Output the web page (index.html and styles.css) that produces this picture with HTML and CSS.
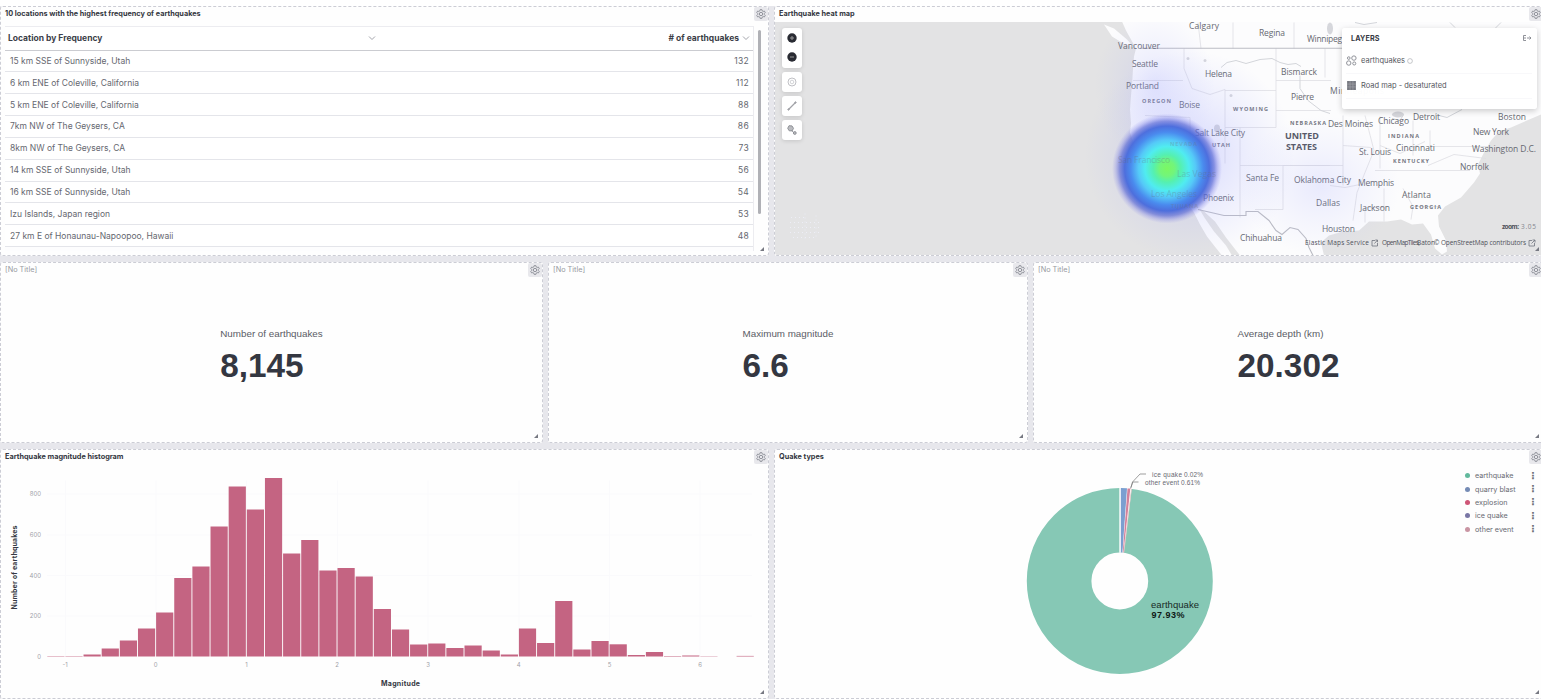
FILE: index.html
```html
<!DOCTYPE html>
<html lang="en">
<head>
<meta charset="utf-8">
<title>Earthquake dashboard</title>
<link rel="stylesheet" href="styles.css">
</head>
<body>
<svg class="defs" width="0" height="0">
  <defs>
    <symbol id="gear" viewBox="0 0 16 16">
      <path d="M6.600 1h2.800l.5 2 1.500.9 2-.6 1.400 2.400L13.300 7.200v1.600l1.500 1.500-1.400 2.400-2-.6-1.500.9-.5 2H6.600l-.5-2-1.500-.9-2 .6-1.400-2.400 1.500-1.500V7.200L1.200 5.700l1.400-2.400 2 .6 1.500-.9z" fill="none" stroke="currentColor" stroke-width="1.500"/>
      <circle cx="8" cy="8" r="2.700" fill="none" stroke="currentColor" stroke-width="1.500"/>
    </symbol>
  </defs>
</svg>
<main class="dashboard">
  <div class="row row-top">
    <section class="panel">
      <header class="panel-head"><h2 class="title">10 locations with the highest frequency of earthquakes</h2><button class="gear"><svg><use href="#gear"/></svg></button></header>
      <div class="table-wrap">
        <div class="table">
          <div class="tr th"><span class="th-name">Location by Frequency</span><svg class="chev" viewBox="0 0 8 8"><path d="M1 2.500l3 3 3-3"/></svg><span class="th-count"># of earthquakes</span><svg class="chev" viewBox="0 0 8 8"><path d="M1 2.500l3 3 3-3"/></svg></div>
          <div class="tr"><span>15 km SSE of Sunnyside, Utah</span><span class="num">132</span></div>
          <div class="tr"><span>6 km ENE of Coleville, California</span><span class="num">112</span></div>
          <div class="tr"><span>5 km ENE of Coleville, California</span><span class="num">88</span></div>
          <div class="tr"><span>7km NW of The Geysers, CA</span><span class="num">86</span></div>
          <div class="tr"><span>8km NW of The Geysers, CA</span><span class="num">73</span></div>
          <div class="tr"><span>14 km SSE of Sunnyside, Utah</span><span class="num">56</span></div>
          <div class="tr"><span>16 km SSE of Sunnyside, Utah</span><span class="num">54</span></div>
          <div class="tr"><span>Izu Islands, Japan region</span><span class="num">53</span></div>
          <div class="tr"><span>27 km E of Honaunau-Napoopoo, Hawaii</span><span class="num">48</span></div>
        </div>
        <div class="scrollbar"></div>
      </div>
      <i class="resize"></i>
    </section>
    <section class="panel map-panel">
      <header class="panel-head"><h2 class="title">Earthquake heat map</h2><button class="gear"><svg><use href="#gear"/></svg></button></header>
      <div class="map">
        <svg class="map-svg" viewBox="775 21.500 768 233" width="768" height="233">
          <defs>
            <radialGradient id="heat">
              <stop offset="0" stop-color="#7cf763"/><stop offset=".14" stop-color="#72f57b"/><stop offset=".25" stop-color="#55f0b0"/><stop offset=".4" stop-color="#50ecf0"/><stop offset=".52" stop-color="#55c9f8"/><stop offset=".66" stop-color="#4a8bee"/><stop offset=".77" stop-color="#4669dc" stop-opacity=".95"/><stop offset=".86" stop-color="#5363d4" stop-opacity=".65"/><stop offset=".93" stop-color="#6b70e0" stop-opacity=".28"/><stop offset="1" stop-color="#8080e8" stop-opacity="0"/>
            </radialGradient>
            <radialGradient id="haze"><stop offset="0" stop-color="#8a90ff" stop-opacity=".34"/><stop offset=".55" stop-color="#9aa0ff" stop-opacity=".15"/><stop offset="1" stop-color="#a0a8ff" stop-opacity="0"/></radialGradient>
          </defs>
          <rect x="775" y="21" width="768" height="235" fill="#e3e3e4"/>
          <path fill="#fcfcfd" d="M1122 21l4 9 5 9 5 9-2 8-1 12-1 17-1 10-1 14 1 14-1 9 5 15 5 12 8 14 10 12 13 7 15 8 8 12 6 12 7 12 7 9 8 10h10l-6-10-12-14-9-13-6-10 5 3 11 10 11 16 14 18H1324l-3-13 8-7 14-4 16-1 10-9h18l14-2 11 5 11-1 8 11 4 14 7 6 5-3-1-11-7-14-1-11 7-9 16-9 13-15 6-9-2-9 5-10 8-14 8-9 12-4 32-14V21zM1104 24l10 4 13 11 7 8-9-3-13-8z"/>
          <g fill="none" stroke="#dedee3" stroke-width=".8">
            <path d="M1198 22l3 26M1233 22v26M1294 22v26M1276 48v79M1325 48v29M1184 48v20l8 20 18 6 15-5v38M1133 80h50M1276 80h55M1225 90h51M1225 127h51M1240 127v90M1276 110h55M1283 165v44h-28M1240 165h90M1283 165h60M1343 115v70M1330 185l15 2 15-3M1343 145l28 2M1365 115l9 35-9 22-8 20-4 28M1380 116v52M1413 120v35M1375 170h95M1380 145l20 8 25-12M1365 222v-15h20M1384 188v33M1403 188l10 18-2 13M1413 206h25M1430 130v16h58M1428 165l26-11 32 4M1145 115l45 2M1190 117v38l20 16M1225 127v36"/>
          </g>
          <path fill="none" stroke="#bbbcc4" stroke-width="1.100" d="M1140 47.700H1343M1198 209l26 6h22v-4h12l11 9 7 10 6 4 8-7 8 2 8 9 3 9 6 12"/>
          <g fill="none" stroke="#d3d5da"><path d="M1221 67l6-5 9-2 10 3 14-4 12-1 8 4 8 2 8-1 5 3M1300 75v13l8 12 13 10 9 3"/><path d="M1355 22l9 2 13-2M1450 22l5 5M1495 28l6-6M1395 112l8 3-3 5-8-2M1435 114l12 3 15-8"/></g>
          <g fill="#d6d7dc"><circle cx="1188" cy="58" r="1.500"/><circle cx="1205" cy="60" r="1.500"/><circle cx="1231" cy="95" r="1.500"/><ellipse cx="1217" cy="128" rx="3" ry="4"/><ellipse cx="1398" cy="114" rx="6" ry="3"/><ellipse cx="1330" cy="28" rx="3" ry="6"/></g>
          <g class="city">
            <text x="1118" y="48" textLength="42">Vancouver</text><text x="1189" y="28.500" textLength="30">Calgary</text><text x="1259" y="35" textLength="26">Regina</text><text x="1307" y="41" textLength="35">Winnipeg</text>
            <text x="1132" y="66" textLength="26">Seattle</text><text x="1126" y="88" textLength="33">Portland</text><text x="1205" y="76.500" textLength="27">Helena</text><text x="1281" y="74.500" textLength="36">Bismarck</text><text x="1179" y="107" textLength="21">Boise</text><text x="1291" y="99" textLength="23">Pierre</text><text x="1330" y="93" textLength="54">Minneapolis</text>
            <text x="1195" y="135" textLength="50">Salt Lake City</text><text x="1203" y="200.500" textLength="31">Phoenix</text><text x="1246" y="180.500" textLength="33">Santa Fe</text><text x="1294" y="182.500" textLength="57">Oklahoma City</text><text x="1316" y="205.500" textLength="24">Dallas</text><text x="1322" y="231" textLength="33">Houston</text><text x="1240" y="240" textLength="42">Chihuahua</text>
            <text x="1328" y="126.500" textLength="45">Des Moines</text><text x="1378" y="123.500" textLength="31">Chicago</text><text x="1413" y="119.500" textLength="27">Detroit</text><text x="1498" y="119" textLength="28">Boston</text><text x="1473" y="134.500" textLength="36">New York</text><text x="1359" y="154" textLength="32">St. Louis</text><text x="1396" y="150" textLength="39">Cincinnati</text><text x="1472" y="151.500" textLength="64">Washington D.C.</text><text x="1460" y="169.500" textLength="29">Norfolk</text><text x="1358" y="185.500" textLength="36">Memphis</text><text x="1402" y="197.500" textLength="29">Atlanta</text><text x="1360" y="210" textLength="30">Jackson</text>
          </g>
          <g class="state">
            <text x="1142" y="102" textLength="29">OREGON</text><text x="1233" y="110" textLength="35">WYOMING</text><text x="1290" y="124" textLength="36">NEBRASKA</text><text x="1212" y="146" textLength="18">UTAH</text><text x="1388" y="137" textLength="31">INDIANA</text><text x="1393" y="162.500" textLength="36">KENTUCKY</text><text x="1410" y="208.500" textLength="31">GEORGIA</text>
          </g>
          <g class="country"><text x="1285" y="138" textLength="34">UNITED</text><text x="1286" y="149" textLength="31">STATES</text></g>
          <ellipse cx="1190" cy="155" rx="105" ry="105" fill="url(#haze)"/>
          <ellipse cx="1155" cy="85" rx="60" ry="75" fill="url(#haze)" opacity=".6"/>
          <ellipse cx="1320" cy="185" rx="80" ry="70" fill="url(#haze)" opacity=".5"/>
          <circle cx="1167" cy="168" r="55" fill="url(#heat)"/>
          <g class="city under"><text x="1118" y="162" textLength="52">San Francisco</text><text x="1177" y="176.500" textLength="39">Las Vegas</text><text x="1151" y="196" textLength="46">Los Angeles</text></g>
          <g class="state under"><text x="1170" y="145" textLength="27">NEVADA</text><text x="1171" y="207" textLength="27">TIJUANA</text></g>
          <g fill="none" stroke="#eff0fa" stroke-dasharray="1 3" opacity=".8"><path d="M791 217h16M790 222h29M790 227h29M790 232h29M793 237h23M805 213v25M816 215v22"/></g>
          <g class="credit"><text x="1502" y="228.500" textLength="17" font-weight="700">zoom:</text><text x="1521" y="228.500" textLength="15" class="light">3.05</text><text x="1305" y="244.500" textLength="64">Elastic Maps Service</text><text x="1382" y="244.500" textLength="38">OpenMapTiles,</text><text x="1417" y="244.500" textLength="18">Baton</text><text x="1434" y="244.500" textLength="92">© OpenStreetMap contributors</text></g>
          <path fill="none" stroke="#70737d" stroke-width=".8" d="M1375 240h-3v5.500h5.500v-3M1374.500 243l3-3.500h-2.200m2.200 0v2.200M1532 240h-3v5.500h5.500v-3M1531.500 243l3.500-3.500h-2.500m2.500 0v2.500"/>
        </svg>
        <nav class="controls">
          <div class="ctl ctl-zoom">
            <svg viewBox="0 0 10 10"><circle cx="5" cy="5" r="4.700" fill="#292b33"/><path d="M3 5h4M5 3v4" stroke="#999"/></svg>
            <svg viewBox="0 0 10 10"><circle cx="5" cy="5" r="4.700" fill="#292b33"/><path d="M3 5h4" stroke="#999"/></svg>
          </div>
          <div class="ctl"><svg viewBox="0 0 10 10" fill="none" stroke="#c0c1c5"><circle cx="5" cy="5" r="4"/><circle cx="5" cy="5" r="1.800" stroke-width=".7"/></svg></div>
          <div class="ctl"><svg viewBox="0 0 10 10" stroke="#a2a3a8" fill="#a2a3a8"><path d="M1.500 8.500l7-7" stroke-width="1.300"/><circle cx="1.500" cy="8.500" r=".7"/><circle cx="8.500" cy="1.500" r=".7"/></svg></div>
          <div class="ctl"><svg viewBox="0 0 10 10" fill="#bbbcc0" stroke="#898b91" stroke-width=".9"><path d="M2 .7l3 .2 1.500 2.400-1.300 2.600-3-.1L.7 3.300z"/><path d="M4.700 5.500l2.200 2.300"/><circle cx="7.800" cy="8" r="1.400"/></svg></div>
        </nav>
        <aside class="layers">
          <div class="layers-head"><b>LAYERS</b><svg viewBox="0 0 10 8"><path d="M4 1.500H1.500v5H4M1.500 4H4M5 4h4M7.500 2.500L9 4 7.500 5.500" fill="none" stroke="#85878f" stroke-width=".9"/></svg></div>
          <div class="layer"><svg class="layer-icon" viewBox="0 0 10 10" fill="none" stroke="#8f9198" stroke-width=".9"><circle cx="2.500" cy="2.800" r="1.200"/><circle cx="7.200" cy="2.800" r="2"/><circle cx="2.500" cy="7.300" r="2"/><circle cx="7.500" cy="7.700" r="1.400"/></svg><span class="layer-a">earthquakes</span><svg class="info" viewBox="0 0 6 6"><circle cx="3" cy="3" r="2.400" fill="none" stroke="#a3a5aa" stroke-width=".6"/></svg></div>
          <div class="layer"><svg class="layer-icon" viewBox="0 0 10 10"><path fill="#777980" d="M1 1h8v8H1z"/><path d="M1 3.700h8M1 6.300h8M3.700 1v8M6.300 1v8" stroke="#a2a3a9" stroke-width=".6"/></svg><span class="layer-b">Road map - desaturated</span></div>
        </aside>
      </div>
      <i class="resize"></i>
    </section>
  </div>
  <div class="row row-mid">
    <section class="panel">
      <header class="panel-head"><h2 class="title no-title">[No Title]</h2><button class="gear"><svg><use href="#gear"/></svg></button></header>
      <div class="metric"><div><p class="label">Number of earthquakes</p><p class="value">8,145</p></div></div>
      <i class="resize"></i>
    </section>
    <section class="panel">
      <header class="panel-head"><h2 class="title no-title">[No Title]</h2><button class="gear"><svg><use href="#gear"/></svg></button></header>
      <div class="metric"><div><p class="label">Maximum magnitude</p><p class="value">6.6</p></div></div>
      <i class="resize"></i>
    </section>
    <section class="panel">
      <header class="panel-head"><h2 class="title no-title">[No Title]</h2><button class="gear"><svg><use href="#gear"/></svg></button></header>
      <div class="metric"><div><p class="label">Average depth (km)</p><p class="value">20.302</p></div></div>
      <i class="resize"></i>
    </section>
  </div>
  <div class="row row-low">
    <section class="panel">
      <header class="panel-head"><h2 class="title">Earthquake magnitude histogram</h2><button class="gear"><svg><use href="#gear"/></svg></button></header>
      <svg class="chart" viewBox="1 464.500 767 232" width="767" height="232">
        <path d="M65.500 480v175M156 480v175M246.500 480v175M337.500 480v175M428 480v175M519 480v175M609.500 480v175M700 480v175M47 493.500h705M47 534.500h705M47 575h705M47 615.500h705" stroke="#fafafc"/>
        <g id="bars" fill="#c46482"></g>
        <g class="tick" text-anchor="end"><text x="41" y="495.500">800</text><text x="41" y="536.500">600</text><text x="41" y="577">400</text><text x="41" y="617.500">200</text><text x="41" y="658">0</text></g>
        <g class="tick" text-anchor="middle"><text x="65" y="666.500">-1</text><text x="155.700" y="666.500">0</text><text x="246.500" y="666.500">1</text><text x="337.200" y="666.500">2</text><text x="428" y="666.500">3</text><text x="518.700" y="666.500">4</text><text x="609.500" y="666.500">5</text><text x="700.200" y="666.500">6</text></g>
        <text class="axis" x="381" y="685" textLength="39">Magnitude</text>
        <text class="axis" transform="translate(17 609) rotate(-90)" textLength="84">Number of earthquakes</text>
      </svg>
      <i class="resize"></i>
    </section>
    <section class="panel">
      <header class="panel-head"><h2 class="title">Quake types</h2><button class="gear"><svg><use href="#gear"/></svg></button></header>
      <div class="pie-body">
        <svg class="pie" viewBox="775 464.500 680 232" width="680" height="232">
          <circle cx="1119.800" cy="580.500" r="60.700" fill="none" stroke="#86c8b5" stroke-width="64.600"/>
          <path d="M1119.300 487.300h12.500l-8 65h-4.500z" fill="#fff"/>
          <path d="M1120.800 487.500l6.200.3-4.600 64.200-1.600-.1z" fill="#7b9fd0"/>
          <path d="M1127.500 487.900l2.800.2-6.800 64-.7-.1z" fill="#d3819b"/>
          <path d="M1131.100 488.200h.7l-7.600 64h-.5z" fill="#e1c0c0"/>
          <path d="M1130.500 488l2.500-7 7-7.500h6M1131 487l1.500-5.500h6" fill="none" stroke="#777" stroke-width=".7"/>
          <g class="callout"><text x="1152" y="476.300" textLength="30">ice quake</text><text x="1184" y="476.300" textLength="19">0.02%</text><text x="1145" y="484" textLength="34">other event</text><text x="1181" y="484" textLength="19">0.61%</text></g>
          <text class="slice-name" x="1151" y="607.500" textLength="48">earthquake</text><text class="slice-val" x="1151.500" y="617" textLength="33">97.93%</text>
        </svg>
        <ul class="legend">
          <li><i class="dot green"></i><span>earthquake</span><b>⋮</b></li>
          <li><i class="dot blue"></i><span>quarry blast</span><b>⋮</b></li>
          <li><i class="dot red"></i><span>explosion</span><b>⋮</b></li>
          <li><i class="dot purple"></i><span>ice quake</span><b>⋮</b></li>
          <li><i class="dot pink"></i><span>other event</span><b>⋮</b></li>
        </ul>
      </div>
      <i class="resize"></i>
    </section>
  </div>
</main>
<script src="bars.js"></script>
</body>
</html>
```
FILE: bars.js
```js
// Bar heights in pixels, one per 0.2-magnitude bin, first bin at -1.2.
const heights = [0.4, 0.4, 2, 8, 16, 28, 44, 78.5, 90, 130, 170, 147, 178.5, 103, 116.5, 86, 88.5,
  80, 47.5, 27, 12, 13, 8.5, 11, 6, 2, 28, 13.5, 55.5, 7, 15.5, 12.2, 1.5, 4.5, 0.5, 1, 0.3, 0, 0.6];
const group = document.getElementById('bars');
heights.forEach((height, i) => {
  if (!height) return;
  const bar = document.createElementNS('http://www.w3.org/2000/svg', 'rect');
  bar.setAttribute('x', 156.1 + (i - 6) * 18.14);
  bar.setAttribute('y', 656 - height);
  bar.setAttribute('width', 17.2);
  bar.setAttribute('height', height);
  group.appendChild(bar);
});
```
FILE: styles.css
```css
* { box-sizing: border-box; }
body { margin: 0; width: 1541px; height: 699px; overflow: hidden; background: #fff; color: #343741; font-family: Inter, "Liberation Sans", sans-serif; }
h2, p, ul { margin: 0; padding: 0; }
.defs { display: block; }
.dashboard { width: 1544px; height: 693px; margin-top: 6px; background: #e7e7ec; display: grid; grid-template-rows: 250px 181px 250px; gap: 6px; }
.row { display: grid; gap: 5px; }
.row-top, .row-low { grid-template-columns: 769px 770px; }
.row-mid { grid-template-columns: 543px 480px 511px; }
.panel { position: relative; min-width: 0; background: #fefefe; border: 1px dashed #cccdd5; border-radius: 3px; overflow: hidden; display: flex; flex-direction: column; }
.panel-head { flex: none; height: 14.500px; display: flex; justify-content: space-between; align-items: flex-start; padding-left: 4px; }
.title { font-size: 7.300px; line-height: 14px; font-weight: 700; white-space: nowrap; }
.no-title { font-weight: 400; color: #9799a1; }
.gear { width: 14px; height: 14px; flex: none; border: 0; padding: 2px; background: #e8e8ec; color: #8c8e96; border-radius: 2px; }
.gear svg { display: block; width: 10px; height: 10px; }
.resize { position: absolute; right: 4px; bottom: 4px; border-style: solid; border-width: 0 0 4px 4px; border-color: transparent transparent #777982 transparent; }

.table-wrap { flex: 1; display: flex; gap: 4px; padding: 4px 7px 4px 4px; }
.table { width: 749px; border-top: 1px solid #ececf0; border-right: 1px solid #ececf0; background: #fdfdfe; }
.tr { height: 21.850px; display: flex; justify-content: space-between; align-items: center; padding: 0 4px 0 5px; border-bottom: 1px solid #e4e5ea; font-size: 8.500px; color: #65676f; background: #fff; white-space: nowrap; }
.th { height: 24px; border-bottom: 1.500px solid #cbccd1; padding: 0 3px; font-weight: 700; color: #3b3e47; justify-content: flex-start; }
.th-name { width: 357px; }
.num { letter-spacing: .3px; }
.chev { width: 8px; height: 8px; fill: none; stroke: #8b8d95; stroke-width: .8; margin-left: 3px; }
.th-count { margin-left: auto; }
.scrollbar { width: 3px; height: 184px; margin-top: 4px; border-radius: 2px; background: #b0b1b6; }

.map { position: relative; flex: 1; overflow: hidden; }
.map-svg { display: block; }
.city { font: 8.500px "Open Sans", "Noto Sans", sans-serif; fill: #676971; }
.under { opacity: .3; }
.state { font: 700 5.500px "Open Sans", sans-serif; fill: #74767f; }
.country { font: 700 9px "Open Sans", sans-serif; fill: #555762; }
.credit { font: 6.500px "Open Sans", sans-serif; fill: #4f515a; }
.light { fill: #85878e; }
.controls { position: absolute; left: 7px; top: 6.500px; display: flex; flex-direction: column; gap: 4.300px; }
.ctl { width: 20px; height: 20px; border-radius: 3px; background: #fff; box-shadow: 0 1px 4px #0002; display: flex; flex-direction: column; align-items: center; justify-content: center; }
.ctl-zoom { height: 39.500px; gap: 9px; }
.ctl svg { width: 10px; height: 10px; }
.layers { position: absolute; left: 567px; top: 6.500px; width: 195px; height: 81px; padding: 0 5px 0 4px; background: #fffffff8; border-radius: 3px; box-shadow: 0 2px 6px #0003; font-size: 7.500px; color: #565861; }
.layers-head { height: 20.500px; display: flex; justify-content: space-between; align-items: center; padding-left: 5px; color: #353842; }
.layers-head b { font-size: 7.200px; letter-spacing: .1px; }
.layers-head svg { width: 10px; height: 8px; }
.layer { height: 25px; display: flex; align-items: center; white-space: nowrap; border-bottom: 1px solid #f8f8fa; }
.layer-icon { width: 11px; height: 11px; margin-right: 4px; }
.info { width: 6px; height: 6px; margin-left: 2px; }

.metric { flex: 1; display: flex; justify-content: center; padding-top: 50px; font-family: "Liberation Sans", Arial, sans-serif; }
.label { font-size: 9.800px; line-height: 12px; color: #5a5c65; white-space: nowrap; }
.value { margin-top: 6px; font-size: 33.300px; line-height: 40px; font-weight: 700; color: #343741; white-space: nowrap; }

.chart, .pie { display: block; flex: none; }
.tick { font: 6px Inter, sans-serif; fill: #9fa1a8; }
.axis { font: 700 7px Inter, sans-serif; fill: #353842; }
.pie-body { display: flex; }
.callout { font: 6.500px "Liberation Sans", sans-serif; fill: #666870; }
.slice-name { font: 9.500px "Liberation Sans", sans-serif; fill: #172a25; }
.slice-val { font: 700 9px "Liberation Sans", sans-serif; fill: #0f1815; }
.legend { list-style: none; width: 87px; padding: 4.500px 4px 0 10px; }
.legend li { height: 13.400px; display: flex; align-items: center; font-size: 7.200px; color: #676971; white-space: nowrap; }
.legend b { margin-left: auto; font: 700 10px/10px "DejaVu Sans", sans-serif; color: #6c6e76; }
.dot { width: 5px; height: 5px; border-radius: 50%; margin-right: 5px; }
.green { background: #62b99d; }
.blue { background: #758bb5; }
.red { background: #ce5576; }
.purple { background: #7976a5; }
.pink { background: #c995a3; }
```
